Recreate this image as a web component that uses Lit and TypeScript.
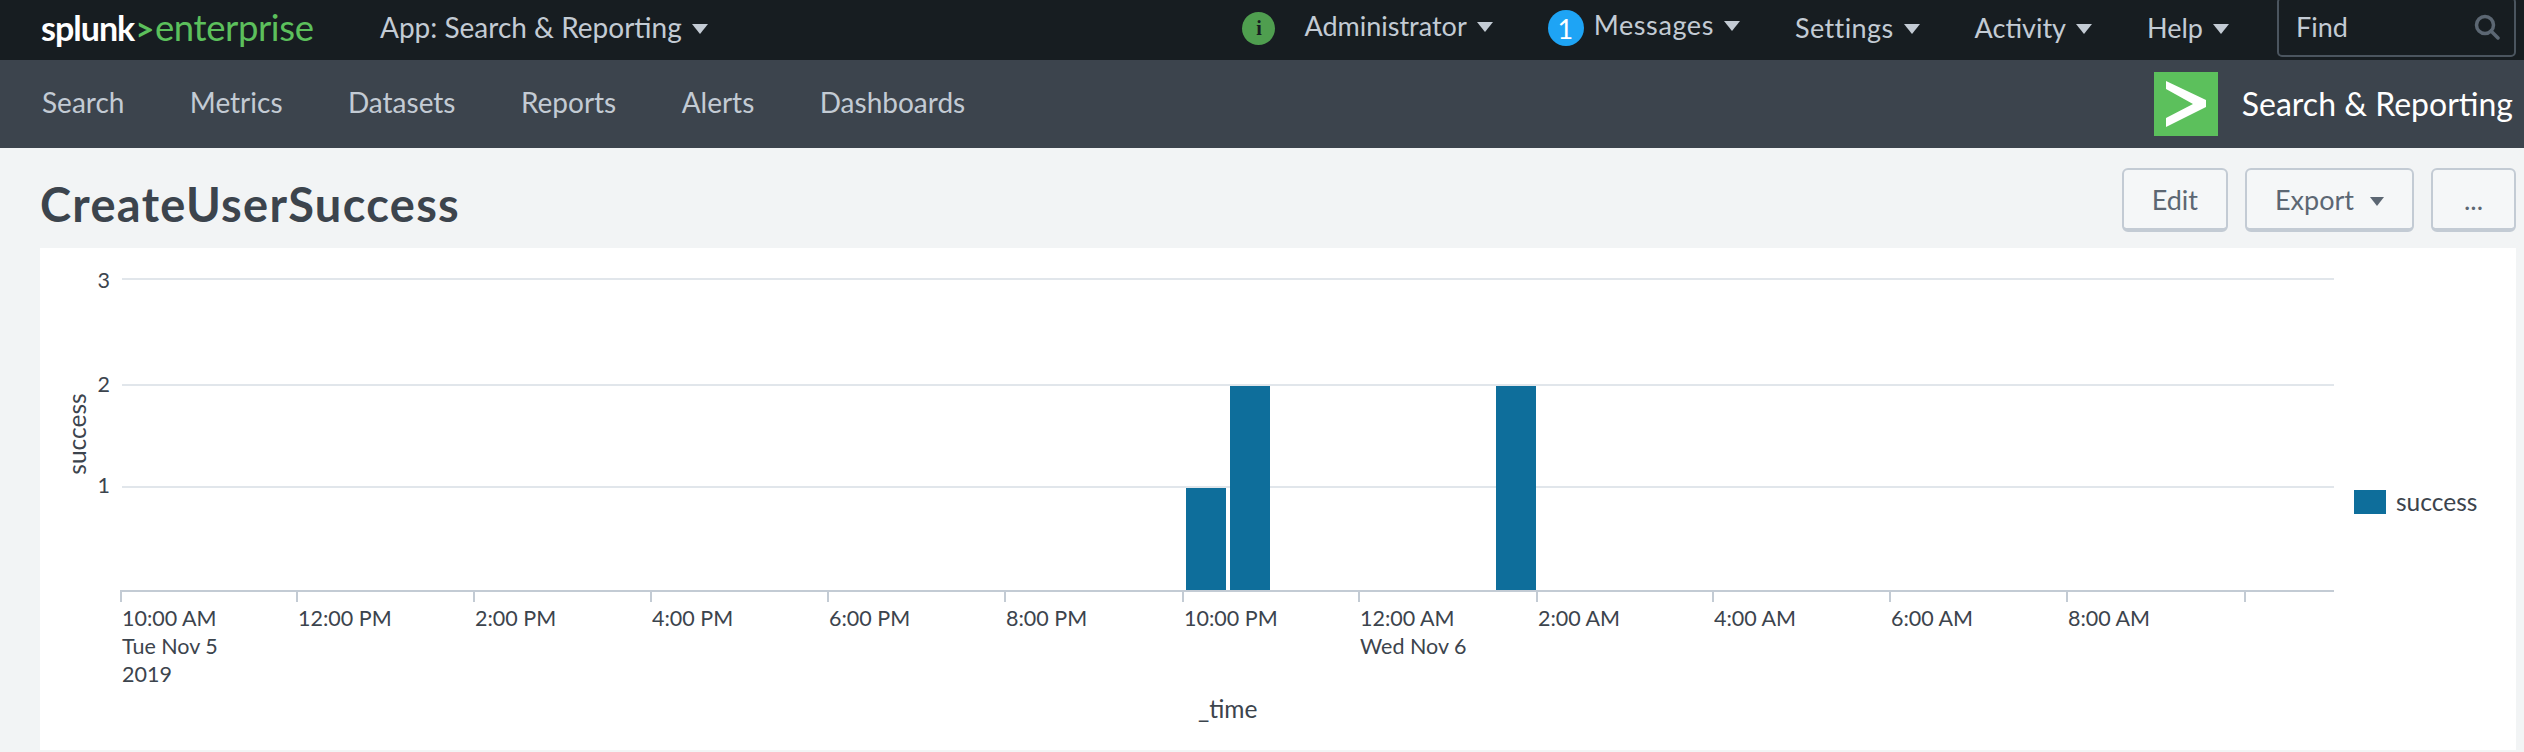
import {LitElement, css, html, svg} from 'lit';
import {customElement} from 'lit/decorators.js';

const NAV = ['Search', 'Metrics', 'Datasets', 'Reports', 'Alerts', 'Dashboards'];

// y position of each gridline, x position of each tick
const GRID = [
  {label: '3', y: 279, base: 288},
  {label: '2', y: 385, base: 392},
  {label: '1', y: 487, base: 493},
];
const TICKS = [
  {x: 121, lines: ['10:00 AM', 'Tue Nov 5', '2019']},
  {x: 297, lines: ['12:00 PM']},
  {x: 474, lines: ['2:00 PM']},
  {x: 651, lines: ['4:00 PM']},
  {x: 828, lines: ['6:00 PM']},
  {x: 1005, lines: ['8:00 PM']},
  {x: 1183, lines: ['10:00 PM']},
  {x: 1359, lines: ['12:00 AM', 'Wed Nov 6']},
  {x: 1537, lines: ['2:00 AM']},
  {x: 1713, lines: ['4:00 AM']},
  {x: 1890, lines: ['6:00 AM']},
  {x: 2067, lines: ['8:00 AM']},
  {x: 2245, lines: []},
];
const BARS = [
  {x: 1186, top: 488},
  {x: 1230, top: 386},
  {x: 1496, top: 386},
];

@customElement('app-root')
export class AppRoot extends LitElement {
  static styles = css`
    :host {
      display: block;
      width: 2524px;
      height: 752px;
      overflow: hidden;
      background: #f2f4f5;
      font-family: Lato, 'Open Sans', sans-serif;
    }

    .caret {
      display: inline-block;
      width: 0;
      height: 0;
      border-left: 8px solid transparent;
      border-right: 8px solid transparent;
      border-top: 10px solid currentColor;
      margin-left: 10px;
      vertical-align: 4px;
    }

    .topbar {
      display: flex;
      align-items: center;
      height: 60px;
      padding: 0 8px 6px 41px;
      box-sizing: border-box;
      background: #171d21;
      color: #c3cbd4;
      font-size: 27px;
    }
    .logo {
      width: 339px;
      color: #5cc05c;
      font-size: 36.500px;
      letter-spacing: -0.4px;
      white-space: nowrap;
    }
    .logo b {
      color: #fff;
      font-size: 34px;
      font-weight: 700;
      letter-spacing: -1px;
    }
    .logo i {
      font-size: 33px;
      font-style: normal;
      font-weight: 700;
      margin: 0 1px;
    }
    .app-menu {
      font-size: 28px;
    }
    .menu {
      display: flex;
      align-items: center;
      gap: 55px;
      margin-left: auto;
    }
    .messages {
      letter-spacing: 0.6px;
    }
    .settings {
      letter-spacing: 0.4px;
    }
    .badge {
      display: inline-flex;
      align-items: center;
      justify-content: center;
      border-radius: 50%;
      color: #fff;
      margin-right: 10px;
      vertical-align: middle;
    }
    .badge.info {
      width: 33px;
      height: 33px;
      background: #4f9e4f;
      color: #171d21;
      font: 700 20px "Liberation Serif", serif;
      margin-right: 29px;
    }
    .badge.count {
      width: 36px;
      height: 36px;
      background: #1ea4f5;
      font-size: 27px;
    }
    .find {
      display: flex;
      align-items: center;
      justify-content: space-between;
      width: 239px;
      height: 60px;
      margin: -1px 0 0 -7px;
      padding: 0 14px 0 17px;
      box-sizing: border-box;
      border: 2px solid #4b555f;
      border-radius: 5px;
    }

    .appbar {
      display: flex;
      align-items: center;
      gap: 65.400px;
      height: 88px;
      padding: 0 11px 0 42px;
      box-sizing: border-box;
      background: #3c444d;
      color: #c3cbd4;
      font-size: 28px;
    }
    .appbar .link {
      margin-top: -4px;
    }
    .app {
      display: flex;
      align-items: center;
      gap: 24px;
      margin-left: auto;
      color: #fff;
      font-size: 32px;
    }
    .app span {
      margin-top: -2px;
    }
    .app svg {
      display: block;
    }

    .header {
      display: flex;
      align-items: flex-start;
      justify-content: space-between;
      height: 100px;
      padding: 20px 8px 0 40px;
      box-sizing: border-box;
    }
    h1 {
      margin: 0;
      font-size: 47px;
      font-weight: 700;
      letter-spacing: 1.300px;
      line-height: 72px;
      color: #3c444d;
    }
    .actions {
      display: flex;
      gap: 17px;
    }
    button {
      height: 64px;
      padding: 0 28px;
      box-sizing: border-box;
      border: 2px solid #c3cbd4;
      border-bottom-width: 4px;
      border-radius: 6px;
      background: #f5f7f8;
      color: #5c6773;
      font: 27px Lato, 'Open Sans', sans-serif;
    }
    button .caret {
      border-left-width: 7px;
      border-right-width: 7px;
      border-top-width: 9px;
      margin-left: 16px;
    }
    button.more {
      width: 85px;
      padding: 0;
    }

    .card {
      width: 2476px;
      height: 502px;
      margin-left: 40px;
      background: #fff;
    }
    .card svg {
      display: block;
    }
    text {
      fill: #3c444d;
      font-size: 21.500px;
    }
    text.big {
      font-size: 24.500px;
    }
  `;

  renderChart() {
    return html`<svg width="2476" height="502" viewBox="40 248 2476 502">
      ${GRID.map((g) => svg`
        <rect x="122" y=${g.y - 1} width="2212" height="2" fill="#e1e6eb"></rect>
        <text x="110" y=${g.base} text-anchor="end">${g.label}</text>
      `)}
      ${BARS.map((b) => svg`
        <rect x=${b.x} y=${b.top} width="40" height=${590 - b.top} fill="#0e6e9b"></rect>
      `)}
      <rect x="120" y="590" width="2214" height="2" fill="#c3cbd4"></rect>
      ${TICKS.map((t) => svg`
        <rect x=${t.x - 1} y="590" width="2" height="12" fill="#c3cbd4"></rect>
        ${t.lines.map((line, i) => svg`
          <text x=${t.x + 1} y=${626 + i * 28}>${line}</text>
        `)}
      `)}
      <text class="big" transform="translate(86 434) rotate(-90)" text-anchor="middle">success</text>
      <text class="big" x="1198" y="718">_time</text>
      <rect x="2354" y="490" width="32" height="24" fill="#0e6e9b"></rect>
      <text class="big" x="2396" y="511">success</text>
    </svg>`;
  }

  render() {
    return html`
      <div class="topbar">
        <div class="logo"><b>splunk</b><i>&gt;</i>enterprise</div>
        <div class="app-menu">App: Search &amp; Reporting<span class="caret"></span></div>
        <div class="menu">
          <div><span class="badge info">i</span>Administrator<span class="caret"></span></div>
          <div class="messages"><span class="badge count">1</span>Messages<span class="caret"></span></div>
          <div class="settings">Settings<span class="caret"></span></div>
          <div>Activity<span class="caret"></span></div>
          <div>Help<span class="caret"></span></div>
          <div class="find">
            Find
            <svg width="26" height="26" viewBox="0 0 26 26" fill="none" stroke="#5c6773" stroke-width="3.500">
              <circle cx="11" cy="11" r="8.500"></circle>
              <path d="M17 17l7 7" stroke-linecap="round"></path>
            </svg>
          </div>
        </div>
      </div>
      <div class="appbar">
        ${NAV.map((item) => html`<div class="link">${item}</div>`)}
        <div class="app">
          <svg width="64" height="64" viewBox="0 0 64 64">
            <rect width="64" height="64" fill="#5cc05c"></rect>
            <path d="M12 9L52 28V35L12 55V46L39 32L12 17Z" fill="#fff"></path>
          </svg>
          <span>Search &amp; Reporting</span>
        </div>
      </div>
      <div class="header">
        <h1>CreateUserSuccess</h1>
        <div class="actions">
          <button>Edit</button>
          <button>Export<span class="caret"></span></button>
          <button class="more">...</button>
        </div>
      </div>
      <div class="card">${this.renderChart()}</div>
    `;
  }
}
